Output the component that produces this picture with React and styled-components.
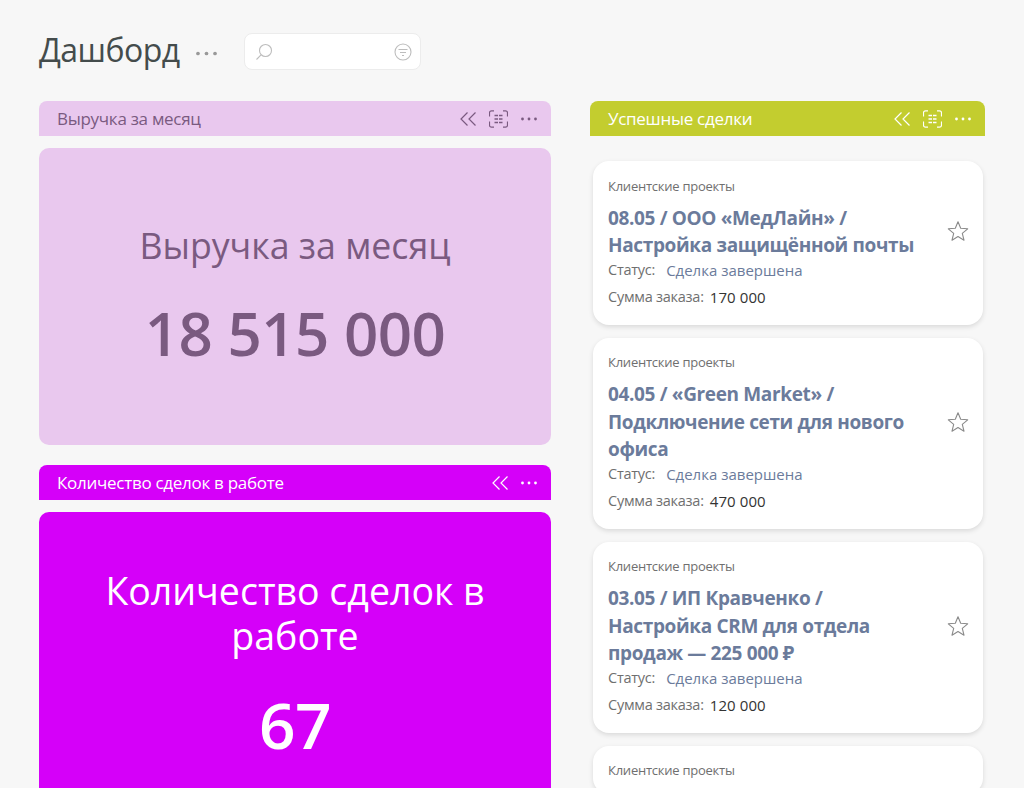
import React from "react";
import styled, { createGlobalStyle } from "styled-components";

const Global = createGlobalStyle`
  html, body { margin: 0; padding: 0; height: 788px; overflow: hidden; background: #f7f7f7; }
  body { font-family: "Open Sans", "Noto Sans", "Liberation Sans", sans-serif; }
`;
const Page = styled.div`
  height: 788px; overflow: hidden; box-sizing: border-box; padding: 0 39px;
`;
const TopBar = styled.header`
  height: 101px; box-sizing: border-box; padding-top: 33px; display: flex; align-items: flex-start;
`;
const Title = styled.h1`
  margin: -1px 0 0; font-size: 32px; line-height: 36px; font-weight: 400; color: #444c4c; letter-spacing: -0.55px; width: 141px;
`;
const TitleDots = styled.span`
  display: flex; width: 48px; height: 36px; align-items: center; margin-left: 16px; margin-top: 2px;
`;
const Search = styled.div`
  width: 177px; height: 37px; box-sizing: border-box; background: #fff; border: 1px solid #ececec; border-radius: 8px;
  display: flex; align-items: center; justify-content: space-between; padding: 0 8px 0 10px;
`;
const Columns = styled.main`
  display: flex; gap: 39px; align-items: flex-start;
`;
const Left = styled.section`
  width: 512px; display: flex; flex-direction: column; flex: none;
`;
const Right = styled.section`
  width: 395px; flex: none;
`;
const WidgetHead = styled.div`
  height: 35px; box-sizing: border-box; padding: 0 14px 0 18px; border-radius: 8px 8px 0 0;
  display: flex; align-items: center; justify-content: space-between;
  background: ${p => p.$bg}; color: ${p => p.$fg}; font-size: 17px; letter-spacing: -0.28px;
`;
const HeadIcons = styled.div`
  display: flex; align-items: center; gap: 13px;
`;
const Tile = styled.div`
  margin-top: 12px; margin-bottom: 20px; height: ${p => p.$h}px; box-sizing: border-box; border-radius: 10px; flex: none;
  background: ${p => p.$bg}; color: ${p => p.$fg};
  display: flex; flex-direction: column; align-items: center; text-align: center; padding: ${p => p.$pt}px 30px 0;
`;
const TileLabel = styled.div`
  font-size: ${p => p.$size}px; line-height: 45px;
`;
const TileValue = styled.div`
  font-size: ${p => p.$size}px; line-height: 84px; font-weight: 600; margin-top: ${p => p.$mt}px; letter-spacing: -0.5px;
`;
const Cards = styled.div`
  display: flex; flex-direction: column; gap: 12.7px; padding: 25px 2px 0 3px;
`;
const Card = styled.article`
  background: #fff; border-radius: 16px; box-shadow: 0 2px 5px rgba(0,0,0,.12);
  padding: 15.5px 15px 15px; box-sizing: border-box;
  display: flex; align-items: center; justify-content: space-between;
`;
const CardBody = styled.div`
  width: 322px;
`;
const Category = styled.div`
  font-size: 13px; line-height: 18px; color: #6f6f6f; letter-spacing: -0.25px;
`;
const CardTitle = styled.div`
  font-size: 19px; line-height: 27.3px; font-weight: 700; color: #6b7b9b; margin: 10px 0 -2px; letter-spacing: -0.35px;
`;
const Row = styled.div`
  font-size: 14.5px; line-height: 26.5px; color: #6f6f6f; display: flex; letter-spacing: -0.25px;
`;
const Label = styled.span`
  margin-right: ${p => p.$gap}px;
`;
const Status = styled.span`
  color: #6b7b9b; font-size: 15px; letter-spacing: 0;
`;
const Amount = styled.span`
  color: #333; font-size: 15px; letter-spacing: 0.1px;
`;
const StarBox = styled.div`
  display: flex; margin-right: -1px; margin-bottom: 24px;
`;

const Dots = ({ c, s = 16 }) => (
  <svg width={s} height={s} viewBox="0 0 16 16" fill={c}>
    <circle cx="1.5" cy="8" r="1.4" /><circle cx="8" cy="8" r="1.4" /><circle cx="14.5" cy="8" r="1.4" />
  </svg>
);
const Chevrons = ({ c }) => (
  <svg width="16" height="16" viewBox="0 0 16 16" fill="none" stroke={c} strokeWidth="1.2">
    <path d="M7.500 1.500 1 8l6.500 6.500" /><path d="M15.500 1.500 9 8l6.500 6.500" />
  </svg>
);
const Scan = ({ c }) => (
  <svg width="19" height="18" viewBox="0 0 19 18" fill="none" stroke={c} strokeWidth="1.2">
    <path d="M5 .8H2.500a2 2 0 0 0-2 2V6.500M14 .8h2.500a2 2 0 0 1 2 2V6.500M5 17.200H2.500a2 2 0 0 1-2-2V11.500M14 17.200h2.500a2 2 0 0 0 2-2V11.500" />
    <path d="M5.500 5.500h3.500M10 5.500h3.500M5.500 9h3.500M10 9h3.500M5.500 12.500h3.500M10 12.500h3.500" strokeWidth="1.500" />
  </svg>
);
const Star = () => (
  <svg width="22" height="22" viewBox="0 0 22 22" fill="none" stroke="#8a8a8a" strokeWidth="1.1" strokeLinejoin="round">
    <path d="M11 1.800 13.700 8.300 20.700 8.800 15.300 13.300 17 20.200 11 16.500 5 20.200 6.700 13.300 1.300 8.800 8.300 8.300Z" />
  </svg>
);
const SearchIcon = () => (
  <svg width="18" height="18" viewBox="0 0 18 18" fill="none" stroke="#bdbdbd" strokeWidth="1.100">
    <circle cx="10.500" cy="7.500" r="6" /><path d="M6 11.800 1.500 16.500" />
  </svg>
);
const FilterIcon = () => (
  <svg width="18" height="18" viewBox="0 0 18 18" fill="none" stroke="#bdbdbd" strokeWidth="1.100">
    <circle cx="9" cy="9" r="8" /><path d="M4.500 6.500h9M6 9.500h6M8 12.500h2" />
  </svg>
);

const Actions = ({ c, scan }) => (
  <HeadIcons>
    <Chevrons c={c} />
    {scan && <Scan c={c} />}
    <Dots c={c} />
  </HeadIcons>
);

const deals = [
  { title: ["08.05 / ООО «МедЛайн» /", "Настройка защищённой почты"], sum: "170 000" },
  { title: ["04.05 / «Green Market» /", "Подключение сети для нового", "офиса"], sum: "470 000" },
  { title: ["03.05 / ИП Кравченко /", "Настройка CRM для отдела", "продаж — 225 000 ₽"], sum: "120 000" },
];

export default function App() {
  return (
    <Page>
      <Global />
      <TopBar>
        <Title>Дашборд</Title>
        <TitleDots><Dots c="#999" s={21} /></TitleDots>
        <Search><SearchIcon /><FilterIcon /></Search>
      </TopBar>
      <Columns>
        <Left>
          <WidgetHead $bg="#e9c8ee" $fg="#7a5a80">Выручка за месяц<Actions c="#7a5a80" scan /></WidgetHead>
          <Tile $bg="#e9c8ee" $fg="#7a5a80" $h={297} $pt={75}>
            <TileLabel $size={35.7}>Выручка за месяц</TileLabel>
            <TileValue $size={60} $mt={23}>18 515 000</TileValue>
          </Tile>
          <WidgetHead $bg="#d500f9" $fg="#fff">Количество сделок в работе<Actions c="#fff" /></WidgetHead>
          <Tile $bg="#d500f9" $fg="#fff" $h={400} $pt={56}>
            <TileLabel $size={37.5}>Количество сделок в работе</TileLabel>
            <TileValue $size={64} $mt={25}>67</TileValue>
          </Tile>
        </Left>
        <Right>
          <WidgetHead $bg="#c3cd2f" $fg="#fff">Успешные сделки<Actions c="#fff" scan /></WidgetHead>
          <Cards>
            {deals.map((d, i) => (
              <Card key={i}>
                <CardBody>
                  <Category>Клиентские проекты</Category>
                  <CardTitle>{d.title.map((t, j) => <div key={j}>{t}</div>)}</CardTitle>
                  <Row><Label $gap={11}>Статус:</Label><Status>Сделка завершена</Status></Row>
                  <Row><Label $gap={6}>Сумма заказа:</Label><Amount>{d.sum}</Amount></Row>
                </CardBody>
                <StarBox><Star /></StarBox>
              </Card>
            ))}
            <Card>
              <CardBody>
                <Category>Клиентские проекты</Category>
              </CardBody>
            </Card>
          </Cards>
        </Right>
      </Columns>
    </Page>
  );
}
